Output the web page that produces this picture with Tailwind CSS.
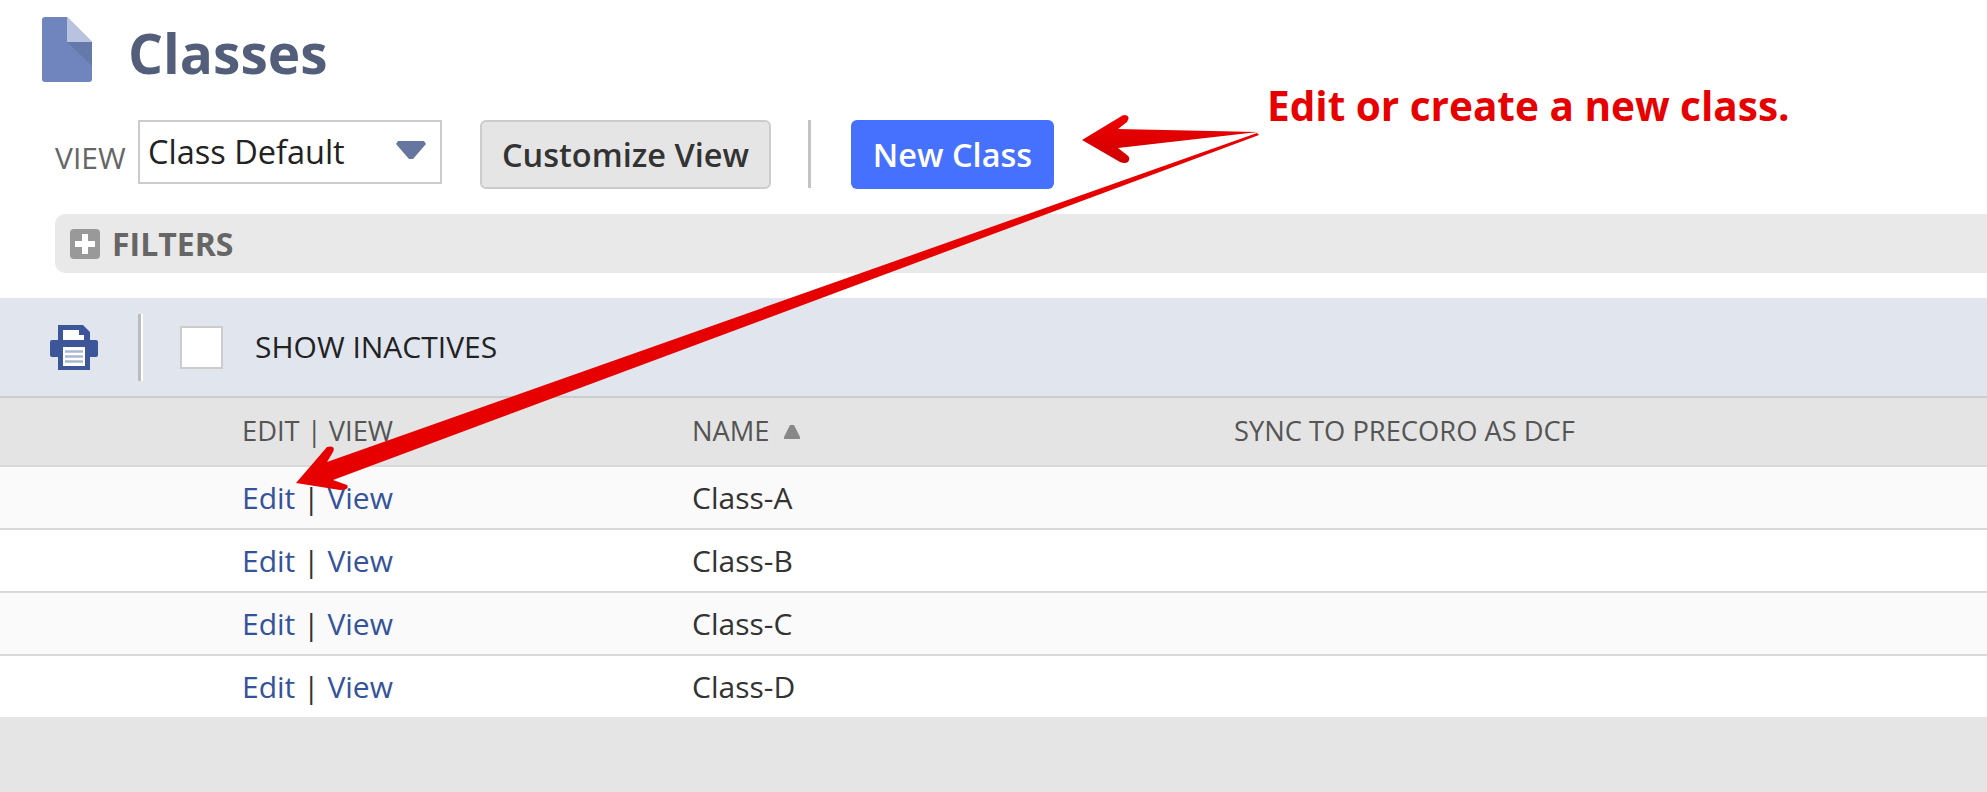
<!DOCTYPE html>
<html lang="en">
  <head>
    <meta charset="UTF-8" />
    <title>Classes</title>
    <script src="https://cdn.jsdelivr.net/npm/@tailwindcss/browser@4"></script>
  </head>
  <body class="bg-[#e5e5e5] font-['Open_Sans',sans-serif]">
    <div class="relative h-[792px] w-[1987px] overflow-hidden">
      <!-- Page header -->
      <div class="h-[298px] bg-white">
        <div class="flex h-[120px] items-start pl-[42px] pt-[17px]">
          <svg class="h-[65px] w-[50px]" viewBox="0 0 50 65">
            <path d="M3 0H25L50 25V62a3 3 0 0 1-3 3H3a3 3 0 0 1-3-3V3a3 3 0 0 1 3-3z" fill="#7085bd" />
            <path d="M25 0L50 25H25z" fill="#b8c3e0" />
            <path d="M25 25H50V49z" fill="#6579ab" />
          </svg>
          <h1 class="mt-[9px] ml-[36px] text-[55px] leading-[54px] font-bold text-[#535f7a]">Classes</h1>
        </div>

        <!-- View controls -->
        <div class="flex h-[69px] items-start pl-[55px]">
          <span class="mt-[18px] w-[83px] text-[30px] leading-[40px] text-[#666]">VIEW</span>
          <div class="relative h-[64px] w-[304px] border-2 border-[#ccc] pl-[8px] text-[32.5px] leading-[60px] text-[#222]">
            Class Default
            <svg class="absolute top-[19px] right-[14px] h-[18px] w-[30px]" viewBox="0 0 30 18">
              <path d="M2 0H28L30 3L17 18H13L0 3z" fill="#66779f" />
            </svg>
          </div>
          <button class="ml-[38px] h-[69px] w-[291px] rounded-[6px] border-2 border-[#ccc] bg-[#e5e5e5] pt-[2px] text-[32.5px] font-semibold text-[#333]">Customize View</button>
          <div class="ml-[37px] h-[68px] w-[3px] bg-[#c4c4c4]"></div>
          <button class="ml-[40px] h-[69px] w-[203px] rounded-[6px] bg-[#4671ff] pt-[2px] text-[32.5px] font-semibold text-white">New Class</button>
        </div>

        <!-- Filters -->
        <div class="mt-[25px] ml-[55px] flex h-[59px] items-center rounded-l-[10px] bg-[#e9e9e9] pl-[15px]">
          <svg class="h-[30px] w-[30px]" viewBox="0 0 30 30">
            <rect width="30" height="30" rx="4" fill="#999" />
            <path d="M12 5h6v7h7v6h-7v7h-6v-7H5v-6h7z" fill="#fff" />
          </svg>
          <span class="ml-[12px] text-[32px] font-bold text-[#666]">FILTERS</span>
        </div>
      </div>

      <!-- List toolbar -->
      <div class="flex h-[100px] items-center border-b-2 border-[#ccc] bg-[#e1e5ee] pl-[50px]">
        <svg class="h-[45px] w-[48px]" viewBox="0 0 48 45">
          <path d="M8 0H33L40 7V15H46a2 2 0 0 1 2 2V30a2 2 0 0 1-2 2H40V45H8V32H2a2 2 0 0 1-2-2V17a2 2 0 0 1 2-2H8z" fill="#3c5699" />
          <path d="M13 5H29V10H34V15H13z" fill="#fff" />
          <path d="M13 22H35V41H13z" fill="#fff" />
          <path d="M15 26.5H33M15 31.5H33M15 36.5H33" stroke="#a9b6d3" stroke-width="2.5" />
        </svg>
        <div class="ml-[40px] h-[67px] w-[5px] border-l-[3px] border-[#b9bdc2] bg-white"></div>
        <div class="ml-[37px] h-[43px] w-[43px] border-2 border-[#ccc] bg-white"></div>
        <span class="ml-[32px] pb-[2px] text-[30px] text-[#222]">SHOW INACTIVES</span>
      </div>

      <!-- Table -->
      <div class="grid h-[69px] grid-cols-[242px_450px_542px_1fr] items-center border-b-2 border-[#d8d8d8] bg-[#e4e4e4] text-[27.3px] text-[#555]">
        <span></span>
        <span>EDIT | VIEW</span>
        <span class="flex items-center gap-[14px]">NAME
          <svg class="h-[14px] w-[16px]" viewBox="0 0 16 14"><path d="M6 0h4l6 12v2H0v-2z" fill="#888" /></svg>
        </span>
        <span>SYNC TO PRECORO AS DCF</span>
      </div>

      <div class="grid h-[63px] grid-cols-[242px_450px_1fr] items-center border-b-2 border-[#d8d8d8] bg-[#fafafa] text-[30px] text-[#333]">
        <span></span>
        <span><a class="text-[#35539a]">Edit</a> | <a class="text-[#35539a]">View</a></span>
        <span>Class-A</span>
      </div>
      <div class="grid h-[63px] grid-cols-[242px_450px_1fr] items-center border-b-2 border-[#d8d8d8] bg-white text-[30px] text-[#333]">
        <span></span>
        <span><a class="text-[#35539a]">Edit</a> | <a class="text-[#35539a]">View</a></span>
        <span>Class-B</span>
      </div>
      <div class="grid h-[63px] grid-cols-[242px_450px_1fr] items-center border-b-2 border-[#d8d8d8] bg-[#fafafa] text-[30px] text-[#333]">
        <span></span>
        <span><a class="text-[#35539a]">Edit</a> | <a class="text-[#35539a]">View</a></span>
        <span>Class-C</span>
      </div>
      <div class="grid h-[61px] grid-cols-[242px_450px_1fr] items-center bg-white text-[30px] text-[#333]">
        <span></span>
        <span><a class="text-[#35539a]">Edit</a> | <a class="text-[#35539a]">View</a></span>
        <span>Class-D</span>
      </div>

      <!-- Annotation over the page -->
      <span class="absolute top-[80px] left-[1267px] text-[40.5px] leading-[52px] font-bold whitespace-nowrap text-[#e60000]">Edit or create a new class.</span>
      <svg class="absolute top-0 left-0 h-[792px] w-[1987px]" viewBox="0 0 1987 792">
        <defs>
          <linearGradient id="red" x1="0" y1="0" x2="0" y2="1">
            <stop offset="0" stop-color="#f00000" />
            <stop offset="1" stop-color="#cf0000" />
          </linearGradient>
        </defs>
        <path d="M1258 132L1118 129L1127 122Q1131 116 1125 115Q1122 115 1120 117L1082 140L1120 162Q1125 164 1128 162Q1131 158 1127 155L1118 148z" fill="url(#red)" />
        <path d="M1257 133L327 462L333 452Q336 445 327 447L296 483L340 490Q350 490 347 485L333 480L1259 135z" fill="#e60000" />
      </svg>
    </div>
  </body>
</html>
